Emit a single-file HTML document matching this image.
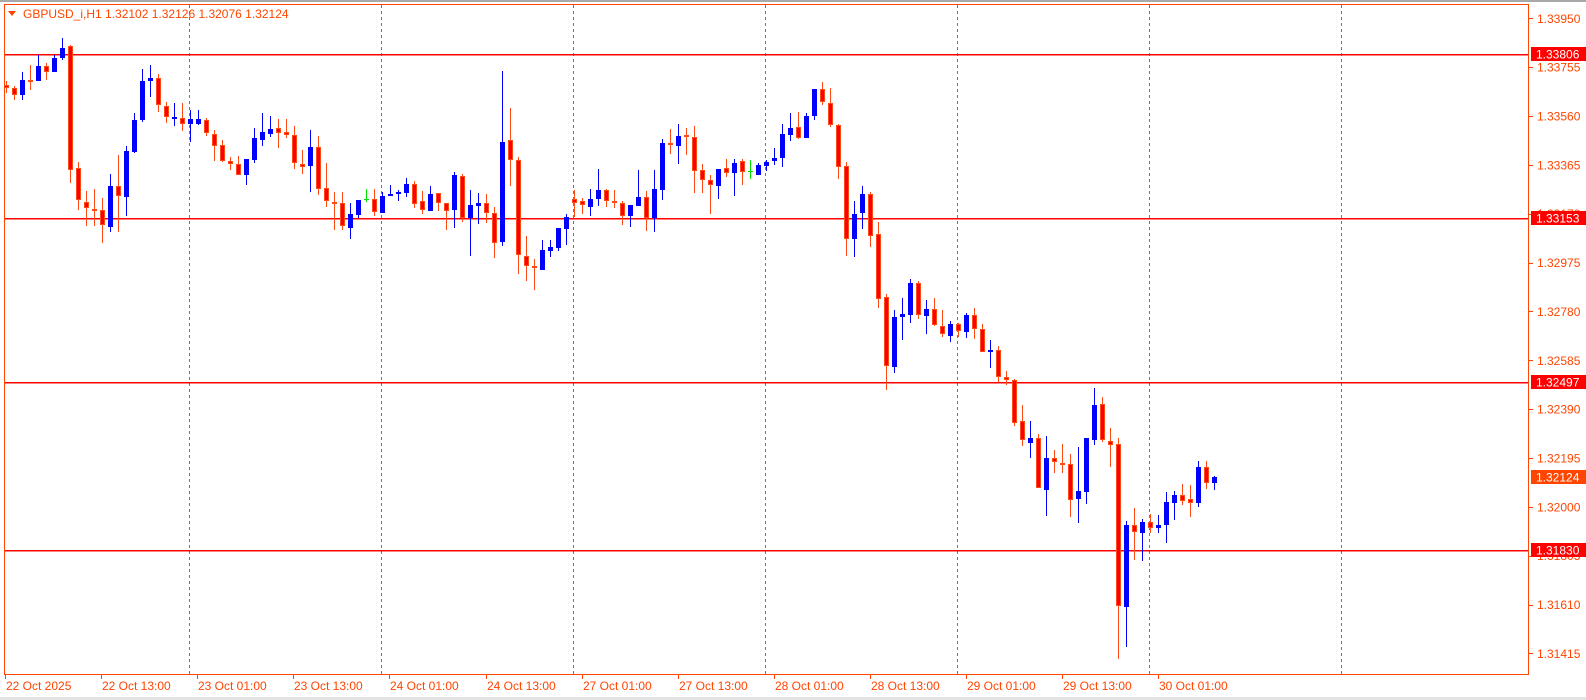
<!DOCTYPE html>
<html><head><meta charset="utf-8"><style>
html,body{margin:0;padding:0;background:#fff;width:1586px;height:700px;overflow:hidden}
svg{display:block}
text{font-family:"Liberation Sans",sans-serif;font-size:12px}
</style></head><body>
<svg id="s" width="1586" height="700" xmlns="http://www.w3.org/2000/svg">
<rect x="0" y="0" width="1586" height="700" fill="#fff"/>
<rect x="0" y="0" width="1586" height="2" fill="#a8a8a8"/>
<rect x="0" y="697" width="1586" height="3" fill="#e4e4e4"/>
<g id="grid"></g>
<g id="c"></g>
<rect x="4.5" y="4.5" width="1524" height="670" fill="none" stroke="#ff4500" stroke-width="1"/>
<g id="ax"></g>
<polygon points="8,11 16,11 12,16" fill="#ff4500"/>
<text x="23" y="18" fill="#ff4500" font-size="12">GBPUSD_i,H1  1.32102 1.32126 1.32076 1.32124</text>
</svg>
<script>
var NS="http://www.w3.org/2000/svg";
function el(p,t,a,txt){var e=document.createElementNS(NS,t);for(var k in a)e.setAttribute(k,a[k]);if(txt)e.textContent=txt;p.appendChild(e);return e;}
var g=document.getElementById('grid'),c=document.getElementById('c'),ax=document.getElementById('ax');
// dashed verticals
[189.5,381.5,573.5,765.5,957.5,1149.5,1341.5].forEach(function(x){el(g,'line',{x1:x,y1:5,x2:x,y2:674,stroke:'#ff4500','stroke-dasharray':'3,3','stroke-width':1});});
// horizontal lines
[[54,'1.33806'],[218,'1.33153'],[382,'1.32497'],[550,'1.31830']].forEach(function(h){el(g,'rect',{x:5,y:h[0],width:1524,height:1.5,fill:'#ff0000'});});
var D=[
// zoom1
['r',85,88,81,93],['r',88,95,86,100],['b',80,95,72,100],['r',80,81,65,90],['b',66,81,55,81],['r',66,72,63,80],['b',58,72,55,72],['b',48,58,38,60],
['r',46,170,45,183],['r',168,200,162,210],['r',202,208,191,226],['r',209,211,189,226],['r',210,225,198,243],['b',186,227,174,232],['r',186,196,155,232],['b',151,197,146,216],
['b',120,152,113,153],['b',81,120,69,122],['b',78,81,65,97],['r',78,105,74,112],['r',106,117,102,123],['b',117,118,103,126],['r',118,124,103,131],['b',119,124,110,142],
['b',119,124,110,125],['r',120,133,118,136],['r',134,146,130,161],['r',145,161,140,162],['r',161,164,157,170],['r',164,175,156,175],['b',159,175,159,185],['b',138,160,128,163],
['b',132,140,113,146],['b',129,134,116,137],['r',128,133,119,148],['r',132,135,119,138],['r',135,163,126,169],['r',164,167,150,174],['b',147,166,130,192],['r',147,189,136,195],
['r',188,201,163,207],['r',202,203,192,230],['r',203,226,192,230],['b',214,228,203,239],['b',200,215,200,218],['g',199,199,189,202],['r',199,212,189,216],
// zoom2
['b',196,213,192,213],['b',194,196,185,196],['b',192,194,190,201],['b',184,193,178,197],['r',184,204,181,208],['r',201,210,191,214],['b',194,211,186,211],['r',193,203,193,211],
['r',203,211,203,230],['b',175,210,172,228],['r',176,218,174,222],['b',205,218,190,256],['b',203,206,193,224],['r',203,213,194,223],['r',213,243,207,258],['b',142,242,71,246],
['r',140,160,108,186],['r',160,255,157,274],['r',256,266,236,281],['r',266,268,259,290],['b',250,270,240,270],['b',247,251,240,257],['b',228,248,228,251],['b',217,229,214,245],
['r',199,203,190,217],['r',201,205,198,214],['b',199,207,189,216],['b',190,199,169,206],['r',190,201,189,207],['r',201,203,190,208],['r',203,216,201,225],['b',205,216,205,227],
['b',197,206,170,206],['r',197,218,191,231],['b',189,218,170,232],['b',143,190,139,200],['r',143,145,129,154],['b',136,146,124,164],['r',135,137,128,155],['r',137,171,126,193],
['r',170,180,164,193],['r',180,185,175,214],['b',169,186,169,199],['r',168,173,159,177],['b',163,173,159,196],['r',161,172,159,185],['g',171,171,160,179],
// zoom3
['b',165,175,163,175],['b',162,166,160,171],['b',158,161,148,165],['b',134,158,124,167],['b',128,135,113,141],['r',127,138,112,139],['b',116,138,113,138],['b',89,116,89,120],
['r',89,102,82,105],['r',103,125,88,127],['r',125,167,124,179],['r',166,239,162,256],['b',214,239,201,257],['b',194,213,186,229],['r',194,236,192,247],['r',234,299,222,308],
['r',297,366,294,390],['b',317,367,310,373],['b',314,317,298,340],['b',283,315,279,323],['r',283,315,281,319],['b',309,316,300,334],['r',309,325,298,326],['r',326,334,310,337],
['b',324,336,321,342],['r',324,331,323,337],['b',315,332,313,338],['r',315,329,308,339],['r',329,352,324,352],['b',350,352,340,368],['r',350,377,346,382],['r',377,380,371,385],
// zoom4
['r',380,423,379,426],['r',421,440,405,446],['b',438,443,421,458],['r',438,488,434,488],['b',458,490,436,516],['r',458,462,450,473],['r',463,465,444,473],['r',464,500,454,517],
['b',491,499,447,523],['b',438,492,438,504],['b',405,440,388,445],['r',404,440,397,442],['r',441,445,428,467],['r',444,606,438,659],['b',525,607,521,647],['r',525,532,508,560],
['b',522,533,519,561],['r',522,528,514,533],['b',525,528,515,533],['b',502,525,492,543],['b',495,503,491,520],['r',495,501,484,505],['r',499,503,485,517],['b',467,503,461,507],
['r',467,483,461,489],['b',477,483,476,490]
];
D.forEach(function(d,i){
  var x=4+8*i,t=d[0],bt=d[1],bb=d[2],wt=d[3],wb=d[4];
  var wc=t=='b'?'#0000ff':(t=='g'?'#00e000':'#ff4a14');
  el(c,'rect',{x:x+2,y:wt,width:1,height:Math.max(1,wb-wt),fill:wc});
  var h=Math.max(2,bb-bt);
  if(t=='b'){el(c,'rect',{x:x,y:bt,width:5,height:h,fill:'#0000ff'});}
  else if(t=='g'){el(c,'rect',{x:x,y:bt,width:5,height:1,fill:'#00e000'});}
  else{el(c,'rect',{x:x,y:bt,width:5,height:h,fill:'#ff4a14'});if(h>2)el(c,'rect',{x:x+1,y:bt+1,width:3,height:h-2,fill:'#ff0000'});}
});
// price axis
var P=['1.33950','1.33755','1.33560','1.33365','1.33170','1.32975','1.32780','1.32585','1.32390','1.32195','1.32000','1.31805','1.31610','1.31415'];
P.forEach(function(p,i){var y=18.3+48.85*i;el(ax,'rect',{x:1529,y:Math.round(y),width:4,height:1,fill:'#ff4500'});el(ax,'text',{x:1537,y:y+4.5,fill:'#ff4500'},p);});
[[54,'1.33806','#ff0000'],[218,'1.33153','#ff0000'],[382,'1.32497','#ff0000'],[550,'1.31830','#ff0000'],[477,'1.32124','#ff4500']].forEach(function(b){
  el(ax,'rect',{x:1531,y:b[0]-7,width:55,height:14,fill:b[2]});
  el(ax,'text',{x:1536,y:b[0]+4.5,fill:'#fff'},b[1]);
});
// time axis
var T=['22 Oct 2025','22 Oct 13:00','23 Oct 01:00','23 Oct 13:00','24 Oct 01:00','24 Oct 13:00','27 Oct 01:00','27 Oct 13:00','28 Oct 01:00','28 Oct 13:00','29 Oct 01:00','29 Oct 13:00','30 Oct 01:00'];
T.forEach(function(t,i){var x=Math.round(5+96.1*i);el(ax,'rect',{x:x,y:675,width:1,height:4,fill:'#ff4500'});el(ax,'text',{x:x+1,y:690,fill:'#ff4500'},t);});
</script>
</body></html>
